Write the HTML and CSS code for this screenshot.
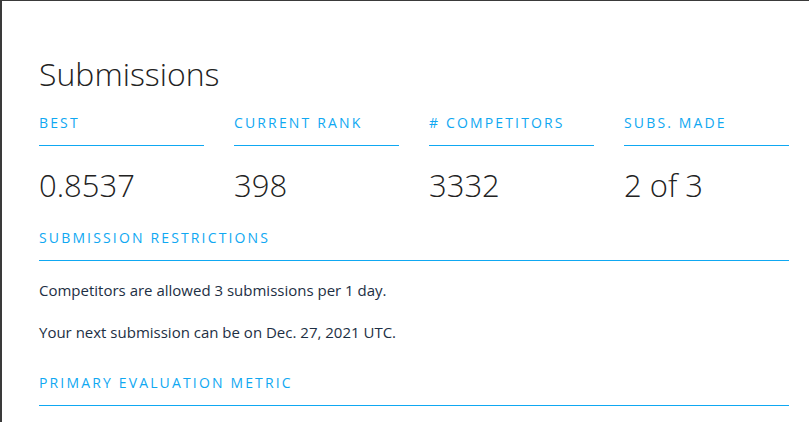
FILE: index.html
```html
<!DOCTYPE html>
<html>
<head>
<meta charset="utf-8">
<link rel="stylesheet" href="styles.css">
</head>
<body>
<div class="panel">
  <h1 class="title">Submissions</h1>
  <div class="stats">
    <div class="stat">
      <div class="label">Best</div>
      <div class="value">0.8537</div>
    </div>
    <div class="stat">
      <div class="label">Current Rank</div>
      <div class="value">398</div>
    </div>
    <div class="stat">
      <div class="label"># Competitors</div>
      <div class="value">3332</div>
    </div>
    <div class="stat">
      <div class="label">Subs. Made</div>
      <div class="value">2 of 3</div>
    </div>
  </div>
  <div class="section-label">Submission Restrictions</div>
  <p class="text">Competitors are allowed 3 submissions per 1 day.</p>
  <p class="text">Your next submission can be on Dec. 27, 2021 UTC.</p>
  <div class="section-label metric">Primary Evaluation Metric</div>
</div>
</body>
</html>
```

FILE: styles.css
```css
html, body {
  margin: 0;
  padding: 0;
  background: #ffffff;
}
body {
  width: 809px;
  height: 422px;
  overflow: hidden;
}
.panel {
  box-sizing: border-box;
  height: 422px;
  border-left: 2px solid #3a3a3a;
  border-top: 1px solid #3a3a3a;
  padding: 55px 20px 0 37px;
}
.title {
  margin: 0;
  font-family: "Open Sans", sans-serif;
  font-weight: 300;
  font-size: 32px;
  line-height: 36px;
  color: #222;
}
.stats {
  display: grid;
  grid-template-columns: repeat(4, 165px);
  column-gap: 30px;
  margin-top: 22px;
}
.label, .section-label {
  font-family: "Open Sans", sans-serif;
  font-weight: 500;
  font-size: 14px;
  line-height: 18px;
  letter-spacing: 2.15px;
  text-transform: uppercase;
  color: #0fa8f2;
  padding-bottom: 13px;
  border-bottom: 1.5px solid #0fa8f2;
}
.value {
  font-family: "Open Sans", sans-serif;
  font-weight: 300;
  font-size: 31px;
  line-height: 40px;
  color: #222;
  margin-top: 19px;
}
.section-label {
  margin-top: 24px;
}
.text {
  font-family: "Open Sans", sans-serif;
  font-size: 15px;
  line-height: 20px;
  color: #1d2f44;
  margin: 19px 0 0 0;
}
.text + .text {
  margin-top: 22px;
}
.section-label.metric {
  margin-top: 32px;
}
```
